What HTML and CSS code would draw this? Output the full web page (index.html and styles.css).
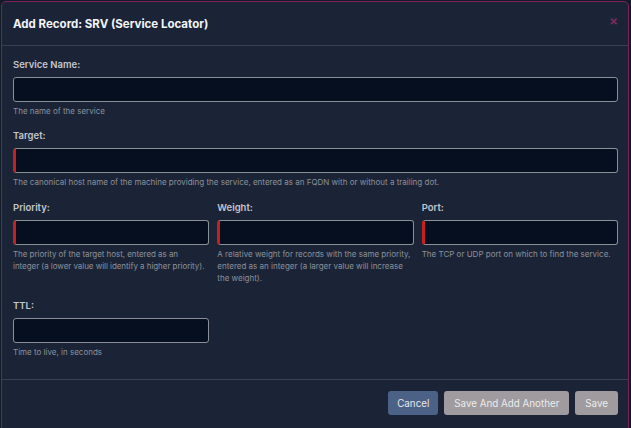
FILE: index.html
```html
<!DOCTYPE html>
<html>
<head>
<meta charset="utf-8">
<link rel="stylesheet" href="styles.css">
</head>
<body>
<div class="modal">
  <div class="modal-header">
    <h1 class="title">Add Record: SRV (Service Locator)</h1>
    <span class="close">&times;</span>
  </div>
  <div class="modal-body">
    <div class="field">
      <label class="label">Service Name:</label>
      <div class="input"></div>
      <div class="help">The name of the service</div>
    </div>
    <div class="field">
      <label class="label">Target:</label>
      <div class="input required"></div>
      <div class="help">The canonical host name of the machine providing the service, entered as an FQDN with or without a trailing dot.</div>
    </div>
    <div class="row">
      <div class="field">
        <label class="label">Priority:</label>
        <div class="input required"></div>
        <div class="help nowrap">The priority of the target host, entered as an<br>integer (a lower value will identify a higher priority).</div>
      </div>
      <div class="field">
        <label class="label">Weight:</label>
        <div class="input required"></div>
        <div class="help">A relative weight for records with the same priority, entered as an integer (a larger value will increase the weight).</div>
      </div>
      <div class="field">
        <label class="label">Port:</label>
        <div class="input required"></div>
        <div class="help">The TCP or UDP port on which to find the service.</div>
      </div>
    </div>
    <div class="row">
      <div class="field">
        <label class="label">TTL:</label>
        <div class="input"></div>
        <div class="help">Time to live, in seconds</div>
      </div>
    </div>
  </div>
  <div class="modal-footer">
    <button class="btn btn-cancel">Cancel</button>
    <button class="btn btn-gray">Save And Add Another</button>
    <button class="btn btn-gray">Save</button>
  </div>
</div>
</body>
</html>
```
FILE: styles.css
```css
* { box-sizing: border-box; }
html, body { margin: 0; padding: 0; }
body {
  background: #131a28;
  font-family: Inter, "Noto Sans", sans-serif;
  width: 631px;
  height: 428px;
  overflow: hidden;
}
.modal {
  margin: 1px 0 0 1px;
  width: 628px;
  height: 440px;
  background: #1b2437;
  border: 1px solid #7a2160;
  border-radius: 5px;
}
.modal-header {
  height: 44px;
  border-bottom: 1px solid #38424f;
  display: flex;
  align-items: center;
  justify-content: space-between;
  padding: 0 10px 0 11px;
}
.title {
  margin: 0;
  font-size: 11.5px;
  font-weight: 700;
  color: #f3f5f8;
}
.close {
  color: #7a2a5e;
  font-size: 13px;
  font-weight: 700;
  margin-top: -6px;
}
.modal-body {
  padding: 13px 10px 21px 11px;
  display: flex;
  flex-direction: column;
  gap: 13px;
}
.row {
  display: grid;
  grid-template-columns: repeat(3, minmax(0, 1fr));
  column-gap: 8px;
  margin-top: 1px;
}
.row + .row { margin-top: 3px; }
.field { display: flex; flex-direction: column; min-width: 0; }
.label {
  font-size: 9.5px;
  line-height: 12px;
  font-weight: 600;
  color: #c3c6cd;
  margin-bottom: 6px;
}
.input {
  height: 25px;
  background: #060f20;
  border: 1px solid #8b8f98;
  border-radius: 3px;
}
.input.required {
  border-left: 3px solid #c4201f;
}
.help {
  margin-top: 3px;
  font-size: 8px;
  line-height: 12px;
  color: #8b919a;
}
.help.nowrap {
  white-space: nowrap;
  letter-spacing: -0.05px;
}
.modal-footer {
  border-top: 1px solid #38424f;
  padding: 11px 10px 0 0;
  display: flex;
  justify-content: flex-end;
  gap: 6px;
}
.btn {
  height: 24px;
  border: none;
  border-radius: 3px;
  font-family: Inter, "Noto Sans", sans-serif;
  font-size: 9.8px;
  padding: 0 10px;
  color: #e6e8ec;
}
.btn-cancel { background: #4b6186; width: 50px; padding: 0; }
.btn-gray { background: #9f9b9f; color: #ececec; }
```
